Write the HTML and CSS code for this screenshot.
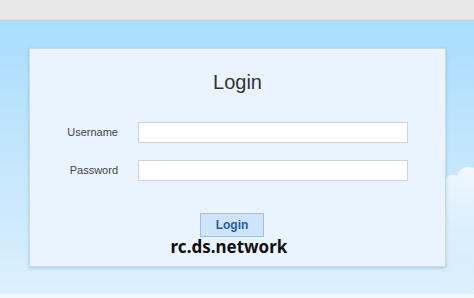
FILE: index.html
```html
<!DOCTYPE html>
<html lang="en">
<head>
    <meta charset="UTF-8">
    <meta name="viewport" content="width=device-width, initial-scale=1.0">
    <title>Login</title>
    <link rel="stylesheet" href="styles.css">
</head>
<body>
    <div class="topbar"></div>
    <div class="sky">
        <svg class="cloud" width="28" height="120" viewBox="0 0 28 120">
            <defs>
                <linearGradient id="fade" x1="0" y1="0" x2="0" y2="1">
                    <stop offset="0" stop-color="#f2f9ff"/>
                    <stop offset="1" stop-color="#dcf0fd" stop-opacity="0"/>
                </linearGradient>
            </defs>
            <path d="M0 12 C3 8 8 8 11 10 C13 2 20 0 28 2 L28 120 L0 120 Z" fill="url(#fade)"/>
        </svg>
        <div class="card">
            <h1>Login</h1>
            <form class="login-form">
                <label for="user">Username</label>
                <input id="user" type="text">
                <label for="pass">Password</label>
                <input id="pass" type="password">
            </form>
            <div class="actions">
                <button type="button">Login</button>
            </div>
            <div class="site">rc.ds.network</div>
        </div>
    </div>
</body>
</html>
```

FILE: styles.css
```css
body {
    margin: 0;
    font-family: "Liberation Sans", Arial, sans-serif;
    background: #eff8fe;
    height: 298px;
    overflow: hidden;
}
.topbar {
    height: 19px;
    background: #e8e8e8;
    border-bottom: 1px solid #dedede;
}
.sky {
    position: relative;
    height: 274px;
    padding-top: 28px;
    box-sizing: border-box;
    background: linear-gradient(#a9dcfd, #c6e7fd 55%, #dcf0fd);
}
.cloud {
    position: absolute;
    right: 0;
    top: 146px;
}
.card {
    position: relative;
    width: 417px;
    margin-left: 29px;
    box-sizing: border-box;
    padding: 21px 0 9px;
    background: #eaf4fe;
    border: 1px solid #c6dcee;
    box-shadow: 0 1px 3px rgba(90, 130, 170, 0.35);
}
h1 {
    margin: 0;
    text-align: center;
    font-size: 20px;
    line-height: 24px;
    font-weight: normal;
    color: #333;
}
.login-form {
    display: grid;
    grid-template-columns: 88px 270px;
    column-gap: 20px;
    row-gap: 17px;
    align-items: center;
    margin-top: 28px;
}
.login-form label {
    text-align: right;
    font-size: 11px;
    color: #444;
    padding-bottom: 2px;
}
.login-form input {
    height: 21px;
    box-sizing: border-box;
    margin: 0;
    border: 1px solid #cdd3d9;
    background: #fff;
}
.actions {
    display: flex;
    justify-content: center;
    padding-right: 11px;
    margin-top: 32px;
}
button {
    width: 64px;
    height: 24px;
    padding: 0;
    font-family: "Liberation Sans", Arial, sans-serif;
    font-size: 12px;
    font-weight: bold;
    color: #2a5d9f;
    background: #cde4fb;
    border: 1px solid #9fc0e2;
}
.site {
    text-align: center;
    padding-right: 17px;
    font-family: "Noto Sans", sans-serif;
    font-weight: bold;
    font-size: 17px;
    line-height: 20px;
    color: #111;
}
```
